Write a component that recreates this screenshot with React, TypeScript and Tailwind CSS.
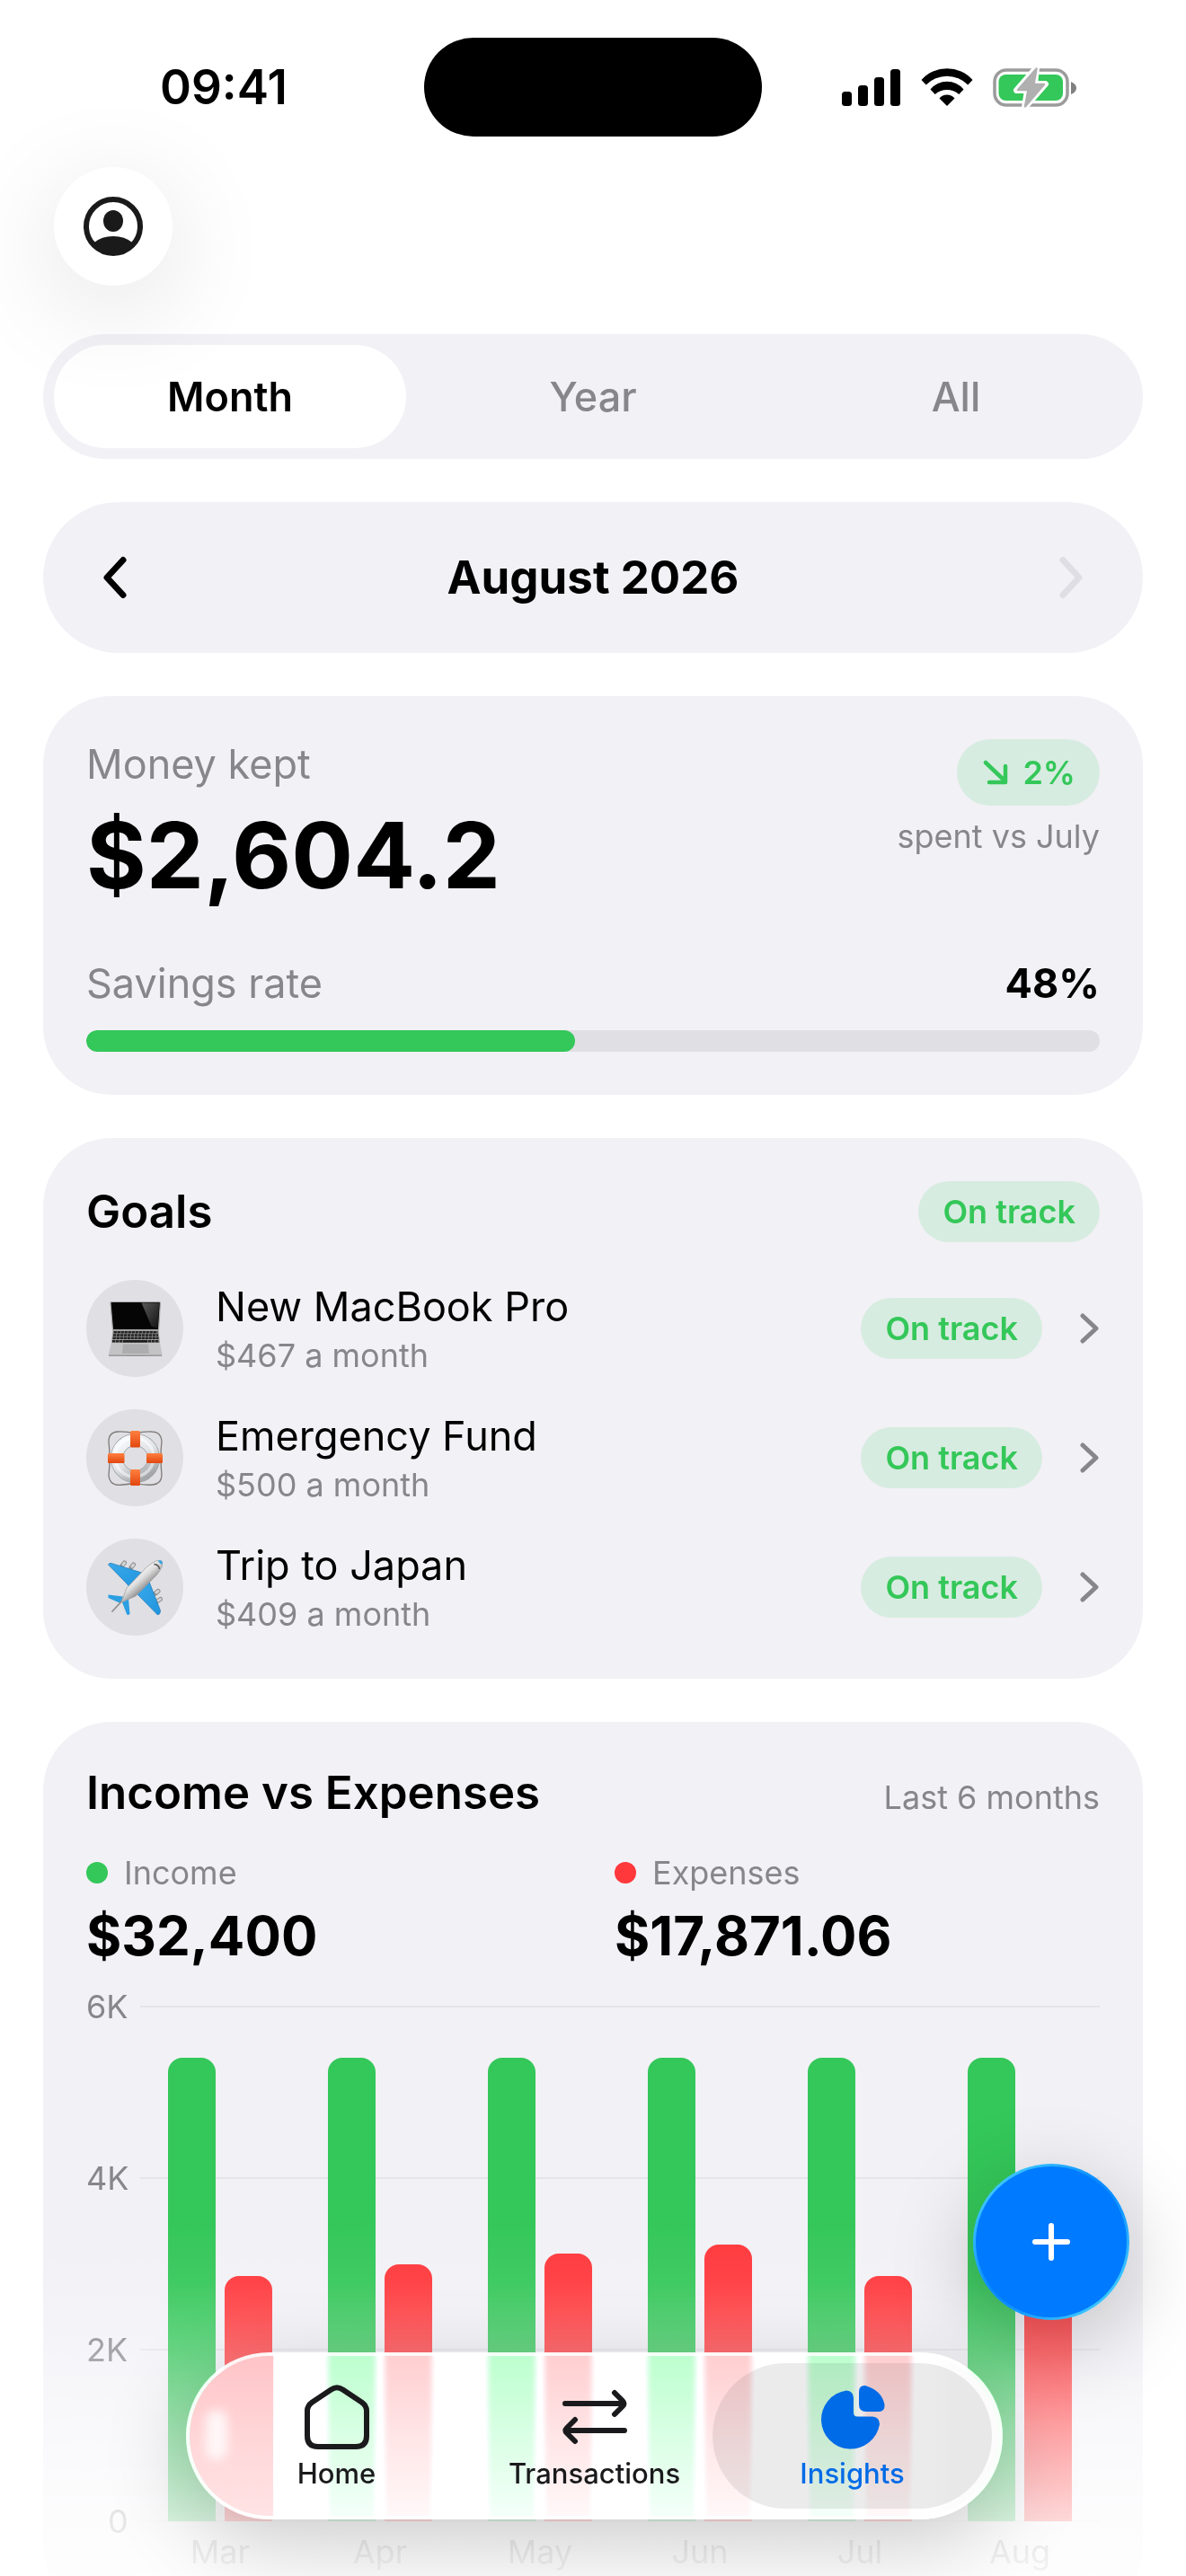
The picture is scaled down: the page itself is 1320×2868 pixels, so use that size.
import { useState } from 'react'

type Goal = {
  id: string
  name: string
  monthly: string
  icon: 'laptop' | 'ring' | 'plane'
}

type MonthTotals = {
  month: string
  income: number
  expenses: number
}

const periods = ['Month', 'Year', 'All']

const goals: Goal[] = [
  { id: 'macbook', name: 'New MacBook Pro', monthly: '$467 a month', icon: 'laptop' },
  { id: 'emergency', name: 'Emergency Fund', monthly: '$500 a month', icon: 'ring' },
  { id: 'japan', name: 'Trip to Japan', monthly: '$409 a month', icon: 'plane' },
]

const totals: MonthTotals[] = [
  { month: 'Mar', income: 5400, expenses: 2860 },
  { month: 'Apr', income: 5400, expenses: 3000 },
  { month: 'May', income: 5400, expenses: 3125 },
  { month: 'Jun', income: 5400, expenses: 3230 },
  { month: 'Jul', income: 5400, expenses: 2860 },
  { month: 'Aug', income: 5400, expenses: 2796 },
]

const axisLabels = ['6K', '4K', '2K', '0']
const axisMax = 6000

function StatusIcons() {
  return (
    <div className="flex items-center gap-[22px]">
      <svg className="h-[42px] w-[66px]" viewBox="0 0 66 42">
        <rect x="0" y="26" width="11" height="16" rx="3.5" />
        <rect x="18" y="19" width="11" height="23" rx="3.5" />
        <rect x="36" y="10" width="11" height="32" rx="3.5" />
        <rect x="54" y="1" width="11" height="41" rx="3.5" />
      </svg>
      <svg className="h-[42px] w-[58px]" viewBox="0 0 57 42">
        <path d="M0 13A38 38 0 0 1 57 13L51.8 18.5A33 33 0 0 0 5.2 18.5Z" />
        <path d="M10 23.5A24 24 0 0 1 47 23.5L41.8 29A20.5 20.5 0 0 0 15.2 29Z" />
        <path d="M20 33.5A11 11 0 0 1 37 33.5L28.5 42Z" />
      </svg>
      <svg className="h-[45px] w-[93px]" viewBox="0 0 93 45">
        <rect x="2" y="3" width="81" height="39" rx="13" fill="none" stroke="#9b9b9b" strokeWidth="3.5" />
        <rect x="6.5" y="8" width="71.5" height="29" rx="8" fill="#34c759" />
        <path d="M87 16q6 2.5 6 7t-6 7z" fill="#808080" />
        <path
          d="M48.5 0.5L26.5 25.5H38.5L35.5 44.5L58.5 18.5H46.5Z"
          fill="#fff"
          stroke="#fff"
          strokeWidth="7"
          strokeLinejoin="round"
        />
        <path
          d="M48.5 1.5L28 25H39.5L36 43.5L57 19H45.5Z"
          fill="#b0b0b0"
          stroke="#b0b0b0"
          strokeWidth="2.5"
          strokeLinejoin="round"
        />
      </svg>
    </div>
  )
}

function GoalIcon({ icon }: { icon: Goal['icon'] }) {
  if (icon === 'laptop') {
    return (
      <svg className="size-[61px]" viewBox="0 0 61 61">
        <defs>
          <linearGradient id="lid" x1="0" y1="0" x2="1" y2="1">
            <stop offset="0" stopColor="#5a5a5a" />
            <stop offset="1" stopColor="#111" />
          </linearGradient>
        </defs>
        <path d="M4 0.5H57Q58.5 0.5 58.4 2L56.5 31.5H5.5L3 2Q3 0.5 4 0.5Z" fill="#050505" stroke="#a9a9a9" strokeWidth="1.2" />
        <path d="M37.5 1.5H57L55.5 30L48.5 27.5Z" fill="url(#lid)" />
        <path d="M5.500 31.500H56.500L58 46H4Z" fill="#9d9d9d" />
        <path d="M6.5 34.2H55.500M6 37.5H56M5.5 40.8H56.5M5 44.2H57" stroke="#222" strokeWidth="2.5" strokeDasharray="3.4 0.6" />
        <path d="M17 44.2H44" stroke="#1c1c1c" strokeWidth="2.5" />
        <path d="M4 46H58L60.5 59Q60.5 60.5 59.5 60.5H41L40 61H21L20 60.5H2Q0.5 60.5 0.8 59Z" fill="#c3c3c5" />
        <path d="M17 47.5H45L46 58H16Z" fill="#adadaf" />
        <path d="M1 60.2H60" stroke="#77777a" strokeWidth="0.9" />
      </svg>
    )
  }

  if (icon === 'ring') {
    return (
      <svg className="size-[61px]" viewBox="0 0 61 61">
        <defs>
          <linearGradient id="buoy" x1="0.2" y1="0" x2="0.8" y2="1">
            <stop offset="0" stopColor="#f4f8fb" />
            <stop offset="0.5" stopColor="#dfe3e6" />
            <stop offset="1" stopColor="#a3a7a9" />
          </linearGradient>
          <linearGradient id="band" x1="0" y1="0" x2="0" y2="1">
            <stop offset="0" stopColor="#ff8040" />
            <stop offset="1" stopColor="#e2470e" />
          </linearGradient>
        </defs>
        <path
          d="M30.5 3Q20 0.5 11 1Q1 1.5 1 12Q3 30 1 50Q2 60 12 60.5Q21 60 30.5 58Q40 61 50 60Q60 59 60 49Q58 30 60 11Q59 1 49 1Q40 0.5 30.5 3Z"
          fill="none"
          stroke="#7f7b78"
          strokeWidth="1.3"
        />
        <circle cx="30.5" cy="30.5" r="20.5" fill="none" stroke="#9ba0a4" strokeWidth="14" />
        <circle cx="30.5" cy="30.5" r="20.5" fill="none" stroke="url(#buoy)" strokeWidth="12.5" />
        <circle cx="29.5" cy="29.5" r="21.5" fill="none" stroke="#fff" strokeOpacity="0.5" strokeWidth="3.5" />
        <rect x="25" y="0" width="11" height="18.5" rx="1.5" fill="url(#band)" />
        <rect x="25" y="43" width="11" height="18" rx="1.5" fill="url(#band)" />
        <rect x="0" y="25" width="18.5" height="11" rx="1.5" fill="url(#band)" />
        <rect x="43" y="25" width="18" height="11" rx="1.5" fill="url(#band)" />
      </svg>
    )
  }

  return (
    <svg className="size-[61px]" viewBox="0 0 61 61">
      <defs>
        <linearGradient id="body" x1="0.3" y1="0.3" x2="0.6" y2="0.65">
          <stop offset="0" stopColor="#fbfbfb" />
          <stop offset="0.5" stopColor="#dedede" />
          <stop offset="1" stopColor="#8f8f8f" />
        </linearGradient>
        <linearGradient id="wing" x1="0" y1="0" x2="1" y2="1">
          <stop offset="0" stopColor="#3aa9ea" />
          <stop offset="1" stopColor="#1f94de" />
        </linearGradient>
      </defs>
      <g stroke="#8d8d8d" strokeWidth="5" strokeLinecap="round">
        <path d="M16 6L18.5 3M26 8L28.5 5M53 37L56 34.5M54.5 46L58.5 43.5" />
      </g>
      <g stroke="#d4d4d4" strokeWidth="3" strokeLinecap="round">
        <path d="M17 5L18.5 3M27 7L28.5 5M54 36L56 34.5M56 45L58.5 43.5" />
      </g>
      <path d="M0.5 5Q1 3 4 3.5L38 14L26 32L20 25Z" fill="url(#wing)" stroke="#1c78b4" strokeWidth="0.7" />
      <path d="M46 24L58.5 56Q58.5 60.5 55.5 61L33 38Z" fill="url(#wing)" stroke="#1c78b4" strokeWidth="0.7" />
      <path d="M0.5 38.5L17 40.5L14 48L0.5 42Z" fill="#2b9fe2" />
      <path d="M16 47L23 43L24.5 60Q22 62 21 60Z" fill="#2b9fe2" />
      <path d="M5 57L17 44" stroke="#8f8f8f" strokeWidth="1.8" strokeLinecap="round" />
      <path d="M15 47L21 31L44 7Q55 -2 60 1Q63 6 54 17L31 40Z" fill="url(#body)" stroke="#9a9a9a" strokeWidth="0.7" />
      <path d="M56 0.5Q61 -1 61 4Q60 5 58 3.5Q56 2 56 0.5Z" fill="#3aa5e2" />
      <path d="M51.5 4.5Q57 5 57.5 10" fill="none" stroke="#555" strokeWidth="1.5" />
    </svg>
  )
}

function Badge() {
  return (
    <span className="rounded-full bg-[#d7ece0] px-[27px] py-3 text-[36px] leading-[44px] font-semibold text-[#34c759]">
      On track
    </span>
  )
}

function MonthSwitcher() {
  return (
    <div className="flex h-[168px] items-center justify-between rounded-full bg-[#f2f1f6] px-[52px]">
      <button aria-label="Previous month" className="p-3">
        <svg className="size-12" viewBox="0 0 48 48" fill="none">
          <path d="M25 4.5L7 24L25 43.5" stroke="#000" strokeWidth="7" strokeLinecap="round" strokeLinejoin="round" />
        </svg>
      </button>
      <h1 className="text-[51px] leading-[62px] font-bold">August 2026</h1>
      <button aria-label="Next month" className="p-3" disabled>
        <svg className="size-12" viewBox="0 0 48 48" fill="none">
          <path d="M23 4.5L41 24L23 43.5" stroke="#dfdee4" strokeWidth="7" strokeLinecap="round" strokeLinejoin="round" />
        </svg>
      </button>
    </div>
  )
}

function MoneyKept() {
  const savingsRate = 48.2

  return (
    <section className="rounded-[76px] bg-[#f2f1f6] p-12">
      <div className="flex items-start justify-between">
        <div>
          <p className="text-[45px] leading-[56px] text-[#87868b]">Money kept</p>
          <p className="mt-3 text-[102px] leading-[122px] font-bold">$2,604.2</p>
        </div>
        <div className="flex flex-col items-end">
          <span className="flex items-center gap-4 rounded-full bg-[#d7ece0] px-[27px] py-[15px] text-[36px] leading-[44px] font-semibold text-[#34c759]">
            <svg className="size-[30px]" viewBox="0 0 30 30" fill="none">
              <path
                d="M5 4L27 25M27 8V26H9"
                stroke="currentColor"
                strokeWidth="4.5"
                strokeLinecap="round"
                strokeLinejoin="round"
              />
            </svg>
            2%
          </span>
          <span className="mt-3 text-[36px] leading-[44px] text-[#87868b]">spent vs July</span>
        </div>
      </div>
      <div className="mt-[54px] flex items-center justify-between text-[45px] leading-[56px]">
        <span className="text-[#87868b]">Savings rate</span>
        <span className="font-bold">48%</span>
      </div>
      <div className="mt-6 h-6 overflow-hidden rounded-full bg-[#e0dfe4]">
        <div className="h-full rounded-full bg-[#34c759]" style={{ width: `${savingsRate}%` }} />
      </div>
    </section>
  )
}

function Goals() {
  return (
    <section className="rounded-[76px] bg-[#f2f1f6] p-12">
      <div className="flex items-center justify-between">
        <h2 className="text-[51px] leading-[62px] font-semibold">Goals</h2>
        <Badge />
      </div>
      <ul className="mt-[42px] space-y-9">
        {goals.map((goal) => (
          <li key={goal.id}>
            <button className="flex w-full items-center text-left">
              <span className="flex size-[108px] items-center justify-center rounded-full bg-[#e0dfe4]">
                <GoalIcon icon={goal.icon} />
              </span>
              <span className="ml-9 flex flex-1 flex-col">
                <span className="text-[45px] leading-[60px]">{goal.name}</span>
                <span className="text-[36px] leading-[48px] text-[#87868b]">{goal.monthly}</span>
              </span>
              <Badge />
              <svg className="ml-10 h-[34px] w-6" viewBox="0 0 24 34" fill="none">
                <path d="M5 3L20 17L5 31" stroke="#87868b" strokeWidth="5" strokeLinecap="round" strokeLinejoin="round" />
              </svg>
            </button>
          </li>
        ))}
      </ul>
    </section>
  )
}

function IncomeVsExpenses() {
  return (
    <section className="rounded-[76px] bg-[#f2f1f6] p-12">
      <div className="flex items-baseline justify-between">
        <h2 className="text-[51px] leading-[62px] font-semibold">Income vs Expenses</h2>
        <span className="text-[36px] leading-[44px] text-[#87868b]">Last 6 months</span>
      </div>

      <div className="mt-9 grid grid-cols-2 gap-12">
        <div>
          <p className="flex items-center gap-[18px] text-[36px] leading-[44px] text-[#87868b]">
            <span className="size-6 rounded-full bg-[#34c759]" />
            Income
          </p>
          <p className="mt-3 text-[60px] leading-[72px] font-bold">$32,400</p>
        </div>
        <div>
          <p className="flex items-center gap-[18px] text-[36px] leading-[44px] text-[#87868b]">
            <span className="size-6 rounded-full bg-[#ff383c]" />
            Expenses
          </p>
          <p className="mt-3 text-[60px] leading-[72px] font-bold">$17,871.06</p>
        </div>
      </div>

      {/* Chart */}
      <div className="mt-[21px] flex text-[36px] leading-[44px] text-[#87868b]">
        <div className="flex h-[617px] w-[60px] flex-col justify-between">
          {axisLabels.map((label) => (
            <span key={label} className={label === '0' ? 'pl-6' : ''}>
              {label}
            </span>
          ))}
        </div>
        <div className="relative flex-1 pt-[22px]">
          <div className="absolute inset-x-0 top-[21px] flex h-[575px] flex-col justify-between">
            {axisLabels.map((label) => (
              <div key={label} className="h-[2px] bg-[#e5e4e9]" />
            ))}
          </div>
          <div className="relative grid grid-cols-6">
            {totals.map((total) => (
              <div key={total.month}>
                <div className="flex h-[573px] items-end justify-center gap-[10px]">
                  <div
                    className="w-[53px] rounded-t-2xl bg-[#34c759]"
                    style={{ height: `${(total.income / axisMax) * 100}%` }}
                  />
                  <div
                    className="w-[53px] rounded-t-2xl bg-[#ff383c]"
                    style={{ height: `${(total.expenses / axisMax) * 100}%` }}
                  />
                </div>
                <p className="mt-3 text-center">{total.month}</p>
              </div>
            ))}
          </div>
        </div>
      </div>
    </section>
  )
}

function TabBar() {
  const item = 'relative flex h-[162px] w-[311px] flex-col items-center rounded-full pt-6'

  return (
    <nav className="absolute right-[204px] bottom-[63px] left-[207px] rounded-full shadow-[0_24px_96px_rgba(0,0,0,0.2)]">
      <div className="relative flex justify-between overflow-hidden rounded-full border-4 border-white/80 bg-white/70 p-2 backdrop-blur-[3px] backdrop-brightness-110 backdrop-saturate-200">
        {/* Glass edges */}
        <div className="absolute inset-y-0 left-0 w-[93px] bg-linear-to-b from-[#ffc4c7] via-[#ffd6d8] to-[#ffe3e4]" />
        <div className="absolute inset-y-0 right-0 w-20 bg-linear-to-r from-white/0 via-[#fcfcfc] via-40% to-[#fcfcfc]" />
        <div className="absolute top-[60px] left-[18px] h-14 w-6 rounded-full bg-white/80 blur-[6px]" />

        <a href="#home" className={item}>
          <svg className="size-[72px]" viewBox="0 0 72 72" fill="none">
            <path
              d="M29.5 5.5Q36 1 42.5 5.5L63.5 19.5Q69 23.5 69 29V57Q69 69 57 69H15Q3 69 3 57V29Q3 23.5 8.5 19.5Z"
              stroke="#1a1a1c"
              strokeWidth="6"
              strokeLinejoin="round"
            />
          </svg>
          <span className="mt-[7px] text-[31px] leading-10 font-medium text-[#1a1a1c]">Home</span>
        </a>
        <a href="#transactions" className={`${item} -ml-6`}>
          <svg className="size-[72px]" viewBox="0 0 72 72" fill="none">
            <path
              d="M3 21H68M58 9L67 18Q70 21 67 24L58 33M69 51H4M14 39L5 48Q2 51 5 54L14 63"
              stroke="#1a1a1c"
              strokeWidth="6"
              strokeLinecap="round"
              strokeLinejoin="round"
            />
          </svg>
          <span className="mt-[7px] text-[31px] leading-10 font-medium text-[#1a1a1c]">Transactions</span>
        </a>
        <a href="#insights" aria-current="page" className={`${item} -ml-6 bg-black/8`}>
          <svg className="size-[72px]" viewBox="0 0 72 72" fill="#006be6">
            <path d="M29 6.5Q37 7 37 15V31Q37 35.5 41.5 35.5H58Q66 36 66 44A32.7 32.7 0 1 1 29 6.5Z" />
            <path d="M43 8Q43 0.5 50 1Q68 6 71.5 22Q72 30 65 30H51Q43 30 43 22Z" />
          </svg>
          <span className="mt-[7px] text-[31px] leading-10 font-medium text-[#006be6]">Insights</span>
        </a>
      </div>
    </nav>
  )
}

export default function App() {
  const [period, setPeriod] = useState('Month')

  return (
    <div className="relative h-screen overflow-hidden bg-white font-[Inter,sans-serif] text-black">
      <main className="h-full overflow-y-auto px-12 [scrollbar-width:none]">
        {/* Status bar */}
        <div className="-mx-12 grid grid-cols-[1fr_376px_1fr] items-center pt-[42px]">
          <span className="pl-[178px] text-[53px] leading-[64px] font-semibold">09:41</span>
          <div className="h-[110px] rounded-full bg-black" />
          <div className="flex justify-end pr-[122px]">
            <StatusIcons />
          </div>
        </div>

        <button
          aria-label="Profile"
          className="relative mt-[34px] ml-3 flex size-[132px] items-center justify-center rounded-full bg-white shadow-[0_24px_120px_rgba(0,0,0,0.12)]"
        >
          <svg className="size-[66px]" viewBox="0 0 66 66">
            <circle cx="33" cy="33" r="30" fill="none" stroke="#1a1a1a" strokeWidth="6" />
            <ellipse cx="33" cy="27" rx="11" ry="12" fill="#1a1a1a" />
            <path d="M12 51Q20 44 33 44T54 51Q46 64 33 64T12 51Z" fill="#1a1a1a" />
          </svg>
        </button>

        <div className="mt-[54px] flex gap-3 rounded-full bg-[#f2f1f6] p-3">
          {periods.map((p) => (
            <button
              key={p}
              onClick={() => setPeriod(p)}
              className={`h-[115px] flex-1 rounded-full text-[45px] leading-[56px] ${
                period === p ? 'bg-white font-semibold text-black' : 'font-medium text-[#87868b]'
              }`}
            >
              {p}
            </button>
          ))}
        </div>

        <div className="mt-12 flex flex-col gap-12">
          <MonthSwitcher />
          <MoneyKept />
          <Goals />
          <IncomeVsExpenses />
        </div>
      </main>

      {/* Content fades out under the tab bar */}
      <div className="pointer-events-none absolute inset-x-0 bottom-0 h-[400px] bg-[linear-gradient(to_bottom,transparent_0%,rgba(255,255,255,0.06)_18%,rgba(255,255,255,0.25)_37%,rgba(255,255,255,0.55)_60%,rgba(255,255,255,0.8)_84%,rgba(255,255,255,0.9)_100%)]" />

      <button
        aria-label="Add transaction"
        className="absolute right-[63px] bottom-[285px] flex size-[174px] items-center justify-center rounded-full bg-[linear-gradient(135deg,#52e0ff,#0a8cff_45%,#0a8cff_55%,#52e0ff)] p-[3px] shadow-[0_24px_96px_rgba(0,0,0,0.22)]"
      >
        <span className="flex size-full items-center justify-center rounded-full bg-[#007aff]">
          <svg className="size-[42px]" viewBox="0 0 42 42" fill="none">
            <path d="M21 3V39M3 21H39" stroke="#fff" strokeWidth="6" strokeLinecap="round" />
          </svg>
        </span>
      </button>

      <TabBar />
    </div>
  )
}
